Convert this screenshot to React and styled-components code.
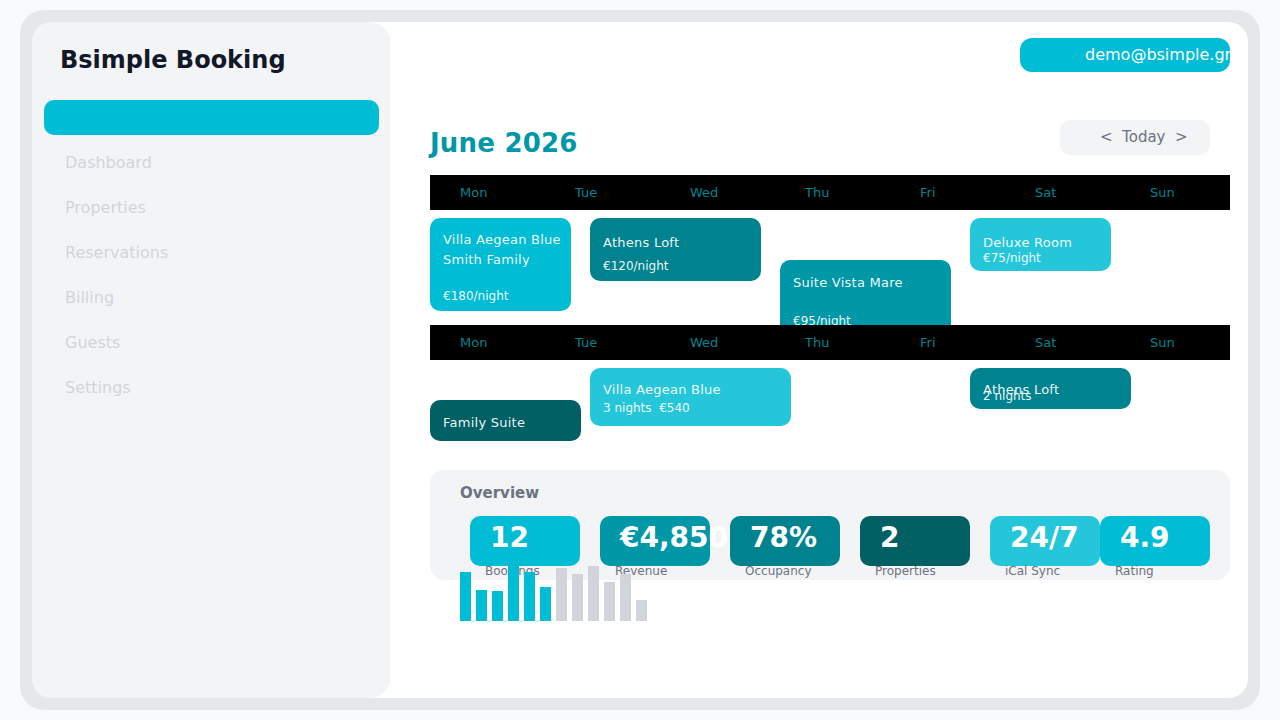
import React from 'react'
import styled, { createGlobalStyle } from 'styled-components'

const GlobalStyle = createGlobalStyle`
  body {
    margin: 0;
    background: #f9fafb;
    font-family: "DejaVu Sans", "Noto Sans", sans-serif;
  }
`

const Frame = styled.div`
  margin: 10px 20px;
  width: 1240px;
  height: 700px;
  box-sizing: border-box;
  padding: 12px;
  background: #e5e7eb;
  border-radius: 24px;
`

const Shell = styled.div`
  display: flex;
  height: 100%;
  background: #ffffff;
  border-radius: 20px;
`

const Sidebar = styled.aside`
  width: 358px;
  flex-shrink: 0;
  box-sizing: border-box;
  padding-top: 23px;
  background: #f3f4f6;
  border-radius: 20px;
`

const Brand = styled.div`
  padding-left: 28px;
  font-size: 24px;
  line-height: 30px;
  font-weight: 700;
  color: #111827;
`

const ActiveBar = styled.div`
  margin: 25px 11px 0 12px;
  height: 35px;
  background: #00bcd4;
  border-radius: 10px;
`

const NavList = styled.nav`
  margin-top: 5px;
`

const NavItem = styled.div`
  height: 45px;
  line-height: 45px;
  padding-left: 33px;
  font-size: 16px;
  color: #d1d5db;
`

const Main = styled.main`
  flex: 1;
  min-width: 0;
  box-sizing: border-box;
  padding: 16px 18px 0 40px;
`

const TopBar = styled.div`
  display: flex;
  justify-content: flex-end;
`

const UserPill = styled.div`
  width: 210px;
  height: 34px;
  line-height: 34px;
  box-sizing: border-box;
  padding-left: 65px;
  background: #00bcd4;
  border-radius: 12px;
  color: #ffffff;
  font-size: 16px;
  white-space: nowrap;
  overflow: hidden;
`

const MonthHeader = styled.div`
  display: flex;
  justify-content: space-between;
  align-items: flex-start;
  height: 35px;
  margin-top: 48px;
`

const MonthTitle = styled.h1`
  margin: 8px 0 0;
  font-size: 26px;
  line-height: 30px;
  font-weight: 700;
  letter-spacing: 0.2px;
  color: #0097a7;
`

const DateNav = styled.div`
  width: 150px;
  height: 35px;
  line-height: 35px;
  box-sizing: border-box;
  padding-left: 40px;
  margin-right: 20px;
  background: #f3f4f6;
  border-radius: 10px;
  color: #6b7280;
  font-size: 15px;
  white-space: pre;
`

const WeekHeader = styled.div`
  display: grid;
  grid-template-columns: repeat(7, 115px);
  height: 35px;
  margin-top: ${p => p.$top || 0}px;
  background: #000000;
  overflow: hidden;
`

const DayLabel = styled.div`
  padding-left: 30px;
  line-height: 35px;
  font-size: 13px;
  color: #00838f;
`

const EventRow = styled.div`
  display: flex;
  align-items: flex-start;
  height: ${p => p.$height}px;
  overflow: hidden;
`

const EventCard = styled.div`
  flex-shrink: 0;
  box-sizing: border-box;
  width: ${p => p.$w}px;
  height: ${p => p.$h}px;
  margin-left: ${p => p.$left}px;
  margin-top: ${p => p.$top}px;
  padding: ${p => p.$pt}px 13px 0;
  background: ${p => p.$bg};
  border-radius: 10px;
  color: rgba(255, 255, 255, 0.94);
`

const EventName = styled.div`
  font-size: 13px;
  line-height: 20px;
  letter-spacing: 0.25px;
  white-space: nowrap;
`

const EventMeta = styled.div`
  margin-top: ${p => p.$mt || 0}px;
  font-size: ${p => p.$size || 12}px;
  line-height: ${p => (p.$size ? 20 : 16)}px;
  letter-spacing: ${p => (p.$size ? 0.25 : 0)}px;
  white-space: pre;
`

const Overview = styled.section`
  height: 110px;
  box-sizing: border-box;
  padding: 14px 30px 0;
  background: #f3f4f6;
  border-radius: 14px;
`

const OverviewTitle = styled.div`
  font-size: 15px;
  line-height: 18px;
  font-weight: 700;
  color: #6b7280;
`

const StatRow = styled.div`
  display: flex;
  margin: 14px 0 0 10px;
  height: 50px;
`

const StatCard = styled.div`
  flex-shrink: 0;
  width: 110px;
  height: 50px;
  box-sizing: border-box;
  padding: 5px 20px 0;
  margin-left: ${p => p.$gap}px;
  background: ${p => p.$bg};
  border-radius: 10px;
  white-space: nowrap;
`

const StatValue = styled.div`
  font-size: 28px;
  line-height: 34px;
  font-weight: 700;
  color: #ffffff;
`

const StatLabel = styled.div`
  margin: 9px 0 0 -5px;
  font-size: 12px;
  line-height: 14px;
  color: #6b7280;
`

const Chart = styled.div`
  display: flex;
  align-items: flex-end;
  gap: 5px;
  height: 55px;
`

const Bar = styled.div`
  width: 11px;
  background: ${p => (p.$active ? '#00bcd4' : '#d1d5db')};
`

const days = ['Mon', 'Tue', 'Wed', 'Thu', 'Fri', 'Sat', 'Sun']
const navItems = ['Dashboard', 'Properties', 'Reservations', 'Billing', 'Guests', 'Settings']

const stats = [
  { value: '12', label: 'Bookings', bg: '#00bcd4', gap: 0 },
  { value: '€4,850', label: 'Revenue', bg: '#0097a7', gap: 20 },
  { value: '78%', label: 'Occupancy', bg: '#00838f', gap: 20 },
  { value: '2', label: 'Properties', bg: '#006064', gap: 20 },
  { value: '24/7', label: 'iCal Sync', bg: '#26c6da', gap: 20 },
  { value: '4.9', label: 'Rating', bg: '#00bcd4', gap: 0 },
]

const bars = [49, 31, 30, 55, 49, 34, 53, 47, 55, 39, 47, 21]

function Week() {
  return (
    <>
      {days.map(d => (
        <DayLabel key={d}>{d}</DayLabel>
      ))}
    </>
  )
}

export default function App() {
  return (
    <>
      <GlobalStyle />
      <Frame>
        <Shell>
          <Sidebar>
            <Brand>Bsimple Booking</Brand>
            <ActiveBar />
            <NavList>
              {navItems.map(n => (
                <NavItem key={n}>{n}</NavItem>
              ))}
            </NavList>
          </Sidebar>

          <Main>
            <TopBar>
              <UserPill>demo@bsimple.gr</UserPill>
            </TopBar>

            <MonthHeader>
              <MonthTitle>June 2026</MonthTitle>
              <DateNav>{'<  Today  >'}</DateNav>
            </MonthHeader>

            <WeekHeader $top={20}>
              <Week />
            </WeekHeader>
            <EventRow $height={115}>
              <EventCard $w={141} $h={93} $left={0} $top={8} $pt={12} $bg="#00bcd4">
                <EventName>Villa Aegean Blue</EventName>
                <EventMeta $size={13}>Smith Family</EventMeta>
                <EventMeta $mt={18}>€180/night</EventMeta>
              </EventCard>
              <EventCard $w={171} $h={63} $left={19} $top={8} $pt={15} $bg="#00838f">
                <EventName>Athens Loft</EventName>
                <EventMeta $mt={5}>€120/night</EventMeta>
              </EventCard>
              <EventCard $w={171} $h={90} $left={19} $top={50} $pt={13} $bg="#0097a7">
                <EventName>Suite Vista Mare</EventName>
                <EventMeta $mt={20}>€95/night</EventMeta>
              </EventCard>
              <EventCard $w={141} $h={53} $left={19} $top={8} $pt={15} $bg="#26c6da">
                <EventName>Deluxe Room</EventName>
                <EventMeta $mt={-3}>€75/night</EventMeta>
              </EventCard>
            </EventRow>

            <WeekHeader>
              <Week />
            </WeekHeader>
            <EventRow $height={110}>
              <EventCard $w={151} $h={41} $left={0} $top={40} $pt={13} $bg="#006064">
                <EventName>Family Suite</EventName>
              </EventCard>
              <EventCard $w={201} $h={58} $left={9} $top={8} $pt={12} $bg="#26c6da">
                <EventName>Villa Aegean Blue</EventName>
                <EventMeta>{'3 nights  €540'}</EventMeta>
              </EventCard>
              <EventCard $w={161} $h={41} $left={179} $top={8} $pt={12} $bg="#00838f">
                <EventName>Athens Loft</EventName>
                <EventMeta $mt={-12}>2 nights</EventMeta>
              </EventCard>
            </EventRow>

            <Overview>
              <OverviewTitle>Overview</OverviewTitle>
              <StatRow>
                {stats.map(s => (
                  <StatCard key={s.label} $bg={s.bg} $gap={s.gap}>
                    <StatValue>{s.value}</StatValue>
                    <StatLabel>{s.label}</StatLabel>
                  </StatCard>
                ))}
              </StatRow>
              <Chart>
                {bars.map((h, i) => (
                  <Bar key={i} $active={i < 6} style={{ height: h }} />
                ))}
              </Chart>
            </Overview>
          </Main>
        </Shell>
      </Frame>
    </>
  )
}
